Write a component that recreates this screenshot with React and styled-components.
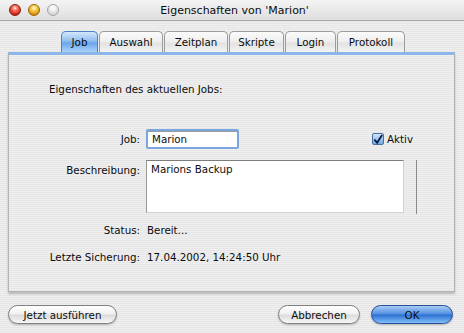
import styled, { createGlobalStyle } from "styled-components";

const GlobalStyle = createGlobalStyle`
  html, body {
    margin: 0;
    padding: 0;
    background: #ececec;
  }
  body {
    font-family: "DejaVu Sans", "Liberation Sans", sans-serif;
    font-size: 10.3px;
    color: #0c0c0c;
  }
`;

const pinstripe = `
  repeating-linear-gradient(
    to bottom,
    #efefef 0px,
    #efefef 1px,
    #e6e6e6 1px,
    #e6e6e6 2px
  )
`;

const Window = styled.div`
  width: 464px;
  height: 333px;
  display: flex;
  flex-direction: column;
  background: ${pinstripe};
  overflow: hidden;
`;

const TitleBar = styled.div`
  height: 20px;
  display: flex;
  align-items: center;
  border-bottom: 1px solid #a8a8a8;
  background: linear-gradient(#f4f4f4, #dedede);
`;

const Lights = styled.div`
  display: flex;
  gap: 7px;
  padding-left: 9px;
`;

const Light = styled.span`
  width: 12px;
  height: 12px;
  border-radius: 50%;
  box-sizing: border-box;
  border: 1px solid ${(p) => p.$edge};
  background: radial-gradient(circle at 50% 30%, #fff 0, ${(p) => p.$hi} 25%, ${(p) => p.$lo} 80%);
`;

const Title = styled.div`
  flex: 1;
  text-align: center;
  font-size: 11px;
  margin-right: 54px;
`;

const Body = styled.div`
  flex: 1;
  display: flex;
  flex-direction: column;
  padding: 10px 9px 0 8px;
`;

const TabStrip = styled.div`
  display: flex;
  justify-content: center;
  padding-left: 3px;
`;

const Tab = styled.div`
  width: ${(p) => p.$w}px;
  height: 21px;
  box-sizing: border-box;
  display: flex;
  align-items: center;
  justify-content: center;
  margin-right: 1px;
  border: 1px solid ${(p) => (p.$active ? "#4f7fc0" : "#9c9c9c")};
  border-bottom: none;
  border-radius: 5px 5px 0 0;
  background: ${(p) =>
    p.$active
      ? "linear-gradient(#d4e7fb 0%, #8fbdf0 45%, #6aa6ea 55%, #a9d2fb 100%)"
      : "linear-gradient(#fbfbfb 0%, #eeeeee 50%, #e2e2e2 55%, #f3f3f3 100%)"};
  &:last-child {
    margin-right: 0;
  }
`;

const Pane = styled.div`
  height: 240px;
  box-sizing: border-box;
  border: 1px solid #b4b4b4;
  border-top: 3px solid #8cb6ea;
  box-shadow: 0 2px 2px rgba(0, 0, 0, 0.22);
  background: ${pinstripe};
  padding-top: 28px;
`;

const Heading = styled.div`
  padding-left: 40px;
  line-height: 13px;
`;

const Form = styled.div`
  display: grid;
  grid-template-columns: 131px 272px;
  column-gap: 6px;
  margin-top: 33px;
  align-items: start;
`;

const Label = styled.div`
  text-align: right;
  line-height: ${(p) => p.$lh || 13}px;
  margin-top: ${(p) => p.$mt || 0}px;
`;

const Value = styled.div`
  line-height: 13px;
  margin-top: ${(p) => p.$mt || 0}px;
  padding-left: 1px;
`;

const JobRow = styled.div`
  display: flex;
  align-items: center;
  justify-content: space-between;
  padding-right: 5px;
`;

const TextInput = styled.div`
  width: 93px;
  height: 20px;
  box-sizing: border-box;
  border: 2px solid #7aa6e0;
  border-radius: 2px;
  background: #fff;
  box-shadow: inset 0 1px 0 #9a9a9a;
  padding: 0 4px;
  display: flex;
  align-items: center;
`;

const Check = styled.label`
  display: flex;
  align-items: center;
  gap: 3px;
`;

const Box = styled.span`
  width: 12px;
  height: 12px;
  box-sizing: border-box;
  border: 1px solid #4a6f9e;
  border-radius: 2px;
  background: linear-gradient(#cfe4fb, #6fa6e6);
  display: flex;
  align-items: center;
  justify-content: center;
`;

const DescRow = styled.div`
  display: flex;
  margin-top: 11px;
`;

const TextArea = styled.div`
  width: 258px;
  height: 53px;
  box-sizing: border-box;
  border: 1px solid #9a9a9a;
  border-top-color: #7c7c7c;
  border-right-color: #d0d0d0;
  border-bottom-color: #d0d0d0;
  background: #fff;
  padding: 2px 4px;
  line-height: 13px;
`;

const Track = styled.div`
  width: 0;
  height: 54px;
  margin-left: 12px;
  border-left: 1px solid #8a8a8a;
`;

const Buttons = styled.div`
  display: flex;
  align-items: center;
  margin-top: 13px;
  padding-right: 2px;
`;

const Spacer = styled.div`
  flex: 1;
`;

const Button = styled.div`
  width: ${(p) => p.$w}px;
  height: 19px;
  box-sizing: border-box;
  margin-left: ${(p) => p.$ml || 0}px;
  border-radius: 10px;
  border: 1px solid ${(p) => (p.$primary ? "#2a4f99" : "#7f7f7f")};
  display: flex;
  align-items: center;
  justify-content: center;
  box-shadow: 0 1px 2px rgba(0, 0, 0, 0.25);
  background: ${(p) =>
    p.$primary
      ? "linear-gradient(#a9ccf5 0%, #4f8fe0 48%, #2d6fd0 52%, #7fc0fb 100%)"
      : "linear-gradient(#ffffff 0%, #f0f0f0 48%, #dadada 52%, #f7f7f7 100%)"};
`;

const tabs = [
  { name: "Job", w: 37, active: true },
  { name: "Auswahl", w: 64 },
  { name: "Zeitplan", w: 64 },
  { name: "Skripte", w: 55 },
  { name: "Login", w: 51 },
  { name: "Protokoll", w: 68 },
];

export default function App() {
  return (
    <>
      <GlobalStyle />
      <Window>
        <TitleBar>
          <Lights>
            <Light $hi="#ff7a6a" $lo="#c0190c" $edge="#8a1a10" />
            <Light $hi="#ffd660" $lo="#d98500" $edge="#9a6400" />
            <Light $hi="#f4f4f4" $lo="#d2d2d2" $edge="#a6a6a6" />
          </Lights>
          <Title>Eigenschaften von 'Marion'</Title>
        </TitleBar>
        <Body>
          <TabStrip>
            {tabs.map((t) => (
              <Tab key={t.name} $active={t.active} $w={t.w}>
                {t.name}
              </Tab>
            ))}
          </TabStrip>
          <Pane>
            <Heading>Eigenschaften des aktuellen Jobs:</Heading>
            <Form>
              <Label $lh={20}>Job:</Label>
              <JobRow>
                <TextInput>Marion</TextInput>
                <Check>
                  <Box>
                    <svg width="11" height="11" viewBox="0 0 11 11">
                      <path d="M1.5 5.5 L4.5 9 L10 0.5" fill="none" stroke="#0b1a3a" strokeWidth="2" />
                    </svg>
                  </Box>
                  Aktiv
                </Check>
              </JobRow>
              <Label $mt={15}>Beschreibung:</Label>
              <DescRow>
                <TextArea>Marions Backup</TextArea>
                <Track />
              </DescRow>
              <Label $mt={10}>Status:</Label>
              <Value $mt={10}>Bereit...</Value>
              <Label $mt={14}>Letzte Sicherung:</Label>
              <Value $mt={14}>17.04.2002, 14:24:50 Uhr</Value>
            </Form>
          </Pane>
          <Buttons>
            <Button $w={109}>Jetzt ausführen</Button>
            <Spacer />
            <Button $w={82}>Abbrechen</Button>
            <Button $w={82} $ml={11} $primary>
              OK
            </Button>
          </Buttons>
        </Body>
      </Window>
    </>
  );
}
